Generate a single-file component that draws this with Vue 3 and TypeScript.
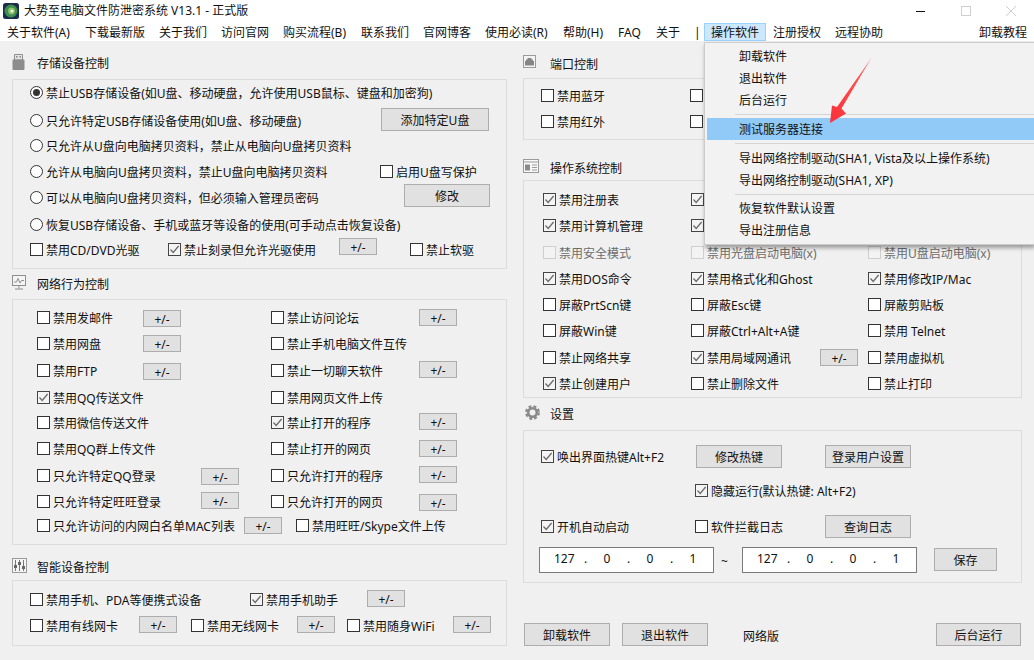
<script setup lang="ts">
type Kind = 'check' | 'radio' | 'btn' | 'ip' | 'text'
interface Item { kind: Kind; x: number; label?: string; on?: boolean; off?: boolean; w?: number; dy?: number; parts?: string[] }
interface Row { cy: number; items: Item[] }
interface Section { x: number; right: number; icon?: string; title?: string; titleX?: number; headCy?: number; top: number; bottom: number; rows: Row[] }

const c = (x: number, label = '', on = false, off = false): Item => ({ kind: 'check', x, label, on, off })
const r = (x: number, label: string, on = false): Item => ({ kind: 'radio', x, label, on })
const b = (x: number, w: number, label: string, dy = 0): Item => ({ kind: 'btn', x, w, label, dy })
const pm = (x: number, dy = 0): Item => b(x, 38, '+/-', dy)
const ip = (x: number): Item => ({ kind: 'ip', x, parts: ['127', '0', '0', '1'] })
const t = (x: number, label: string): Item => ({ kind: 'text', x, label })

const leftSections: Section[] = [
  {
    x: 12, right: 507, icon: 'usb', title: '存储设备控制', titleX: 37, headCy: 62, top: 79, bottom: 269,
    rows: [
      { cy: 92, items: [r(30, '禁止USB存储设备(如U盘、移动硬盘\uFF0C允许使用USB鼠标、键盘和加密狗)', true)] },
      { cy: 120, items: [r(30, '只允许特定USB存储设备使用(如U盘、移动硬盘)'), b(381, 108, '添加特定U盘', -1)] },
      { cy: 145, items: [r(30, '只允许从U盘向电脑拷贝资料\uFF0C禁止从电脑向U盘拷贝资料')] },
      { cy: 171, items: [r(30, '允许从电脑向U盘拷贝资料\uFF0C禁止U盘向电脑拷贝资料'), c(380, '启用U盘写保护')] },
      { cy: 197, items: [r(30, '可以从电脑向U盘拷贝资料\uFF0C但必须输入管理员密码'), b(404, 86, '修改', -1.5)] },
      { cy: 224, items: [r(30, '恢复USB存储设备、手机或蓝牙等设备的使用(可手动点击恢复设备)')] },
      { cy: 249, items: [c(30, '禁用CD/DVD光驱'), c(168, '禁止刻录但允许光驱使用', true), pm(339, -2.5), c(410, '禁止软驱')] },
    ],
  },
  {
    x: 12, right: 507, icon: 'monitor', title: '网络行为控制', titleX: 37, headCy: 283, top: 299, bottom: 545,
    rows: [
      { cy: 317, items: [c(37, '禁用发邮件'), pm(143, 1.5), c(271, '禁止访问论坛'), pm(419, 0.5)] },
      { cy: 343, items: [c(37, '禁用网盘'), pm(143, 0.5), c(271, '禁止手机电脑文件互传')] },
      { cy: 370, items: [c(37, '禁用FTP'), pm(143, 1.5), c(271, '禁止一切聊天软件'), pm(419, -0.5)] },
      { cy: 397, items: [c(37, '禁用QQ传送文件', true), c(271, '禁用网页文件上传')] },
      { cy: 422, items: [c(37, '禁用微信传送文件'), c(271, '禁止打开的程序', true), pm(419, -0.5)] },
      { cy: 448, items: [c(37, '禁用QQ群上传文件'), c(271, '禁止打开的网页'), pm(419, 0.5)] },
      { cy: 475, items: [c(37, '只允许特定QQ登录'), pm(201, 1.5), c(271, '只允许打开的程序'), pm(419, -0.5)] },
      { cy: 501, items: [c(37, '只允许特定旺旺登录'), pm(201, -0.5), c(271, '只允许打开的网页'), pm(419, 1.5)] },
      { cy: 525, items: [c(37, '只允许访问的内网白名单MAC列表'), pm(244, 0.5), c(296, '禁用旺旺/Skype文件上传')] },
    ],
  },
  {
    x: 12, right: 507, icon: 'sliders', title: '智能设备控制', titleX: 37, headCy: 566, top: 580, bottom: 646,
    rows: [
      { cy: 599, items: [c(30, '禁用手机、PDA等便携式设备'), c(250, '禁用手机助手', true), pm(367, -0.5)] },
      { cy: 625, items: [c(30, '禁用有线网卡'), pm(139, -0.5), c(191, '禁用无线网卡'), pm(297, -0.5), c(347, '禁用随身WiFi'), pm(453, -0.5)] },
    ],
  },
]

const rightSections: Section[] = [
  {
    x: 523, right: 1022, icon: 'port', title: '端口控制', titleX: 550, headCy: 63, top: 78, bottom: 140,
    rows: [
      { cy: 95, items: [c(541, '禁用蓝牙'), c(690)] },
      { cy: 121, items: [c(541, '禁用红外'), c(690)] },
    ],
  },
  {
    x: 523, right: 1022, icon: 'window', title: '操作系统控制', titleX: 550, headCy: 167, top: 180, bottom: 398,
    rows: [
      { cy: 199, items: [c(543, '禁用注册表', true), c(691, '', true)] },
      { cy: 225, items: [c(543, '禁用计算机管理', true), c(691, '', true)] },
      { cy: 252, items: [c(543, '禁用安全模式', false, true), c(691, '禁用光盘启动电脑(x)', false, true), c(868, '禁用U盘启动电脑(x)', false, true)] },
      { cy: 278, items: [c(543, '禁用DOS命令', true), c(691, '禁用格式化和Ghost', true), c(868, '禁用修改IP/Mac', true)] },
      { cy: 304, items: [c(543, '屏蔽PrtScn键'), c(691, '屏蔽Esc键'), c(868, '屏蔽剪贴板')] },
      { cy: 330, items: [c(543, '屏蔽Win键'), c(691, '屏蔽Ctrl+Alt+A键'), c(868, '禁用 Telnet')] },
      { cy: 357, items: [c(543, '禁止网络共享'), c(691, '禁用局域网通讯', true), pm(820, 0.5), c(868, '禁用虚拟机')] },
      { cy: 383, items: [c(543, '禁止创建用户', true), c(691, '禁止删除文件'), c(868, '禁止打印')] },
    ],
  },
  {
    x: 523, right: 1022, icon: 'gear', title: '设置', titleX: 550, headCy: 413, top: 430, bottom: 583,
    rows: [
      { cy: 456, items: [c(541, '唤出界面热键Alt+F2', true), b(696, 86, '修改热键', 0.5), b(825, 86, '登录用户设置', 0.5)] },
      { cy: 490, items: [c(695, '隐藏运行(默认热键: Alt+F2)', true)] },
      { cy: 526, items: [c(541, '开机自动启动', true), c(695, '软件拦截日志'), b(825, 86, '查询日志', 0.5)] },
      { cy: 559.5, items: [ip(539), t(721, '~'), ip(742), b(934, 63, '保存')] },
    ],
  },
  {
    x: 523, right: 1022, top: 614, bottom: 650,
    rows: [
      { cy: 634.5, items: [b(524, 86, '卸载软件'), b(622, 86, '退出软件'), t(743, '网络版'), b(936, 85, '后台运行')] },
    ],
  },
]

const BODY_TOP = 41
const ROW_H = 20

function sectionStyle(sec: Section, list: Section[], i: number) {
  const prev = i === 0 ? BODY_TOP : list[i - 1].bottom
  const first = sec.headCy !== undefined ? sec.headCy - ROW_H / 2 : sec.top
  return { marginTop: `${first - prev}px`, marginLeft: `${sec.x}px`, width: `${sec.right - sec.x}px` }
}
function headStyle(sec: Section) {
  return { paddingLeft: `${(sec.titleX ?? sec.x) - sec.x}px` }
}
function boxStyle(sec: Section) {
  const mt = sec.headCy !== undefined ? sec.top - (sec.headCy + ROW_H / 2) : 0
  return { marginTop: `${mt}px`, height: `${sec.bottom - sec.top}px` }
}
function rowStyle(sec: Section, i: number) {
  const prevEdge = i === 0 ? sec.top + 1 : sec.rows[i - 1].cy + ROW_H / 2
  return { marginTop: `${sec.rows[i].cy - ROW_H / 2 - prevEdge}px`, paddingLeft: `${sec.rows[i].items[0].x - sec.x - 1}px` }
}
function cellStyle(row: Row, j: number) {
  const next = row.items[j + 1]
  return next ? { width: `${next.x - row.items[j].x}px` } : {}
}
function btnStyle(it: Item) {
  return { width: `${it.w}px`, marginTop: `${(it.dy ?? 0) * 2}px` }
}

const menuItems = [
  { label: '关于软件(A)', w: 78 }, { label: '下载最新版', w: 74 }, { label: '关于我们', w: 62 }, { label: '访问官网', w: 62 },
  { label: '购买流程(B)', w: 78 }, { label: '联系我们', w: 62 }, { label: '官网博客', w: 62 }, { label: '使用必读(R)', w: 78 },
  { label: '帮助(H)', w: 55 }, { label: 'FAQ', w: 38 }, { label: '关于', w: 38 }, { label: '|', w: 17 },
  { label: '操作软件', w: 62 }, { label: '注册授权', w: 62 }, { label: '远程协助', w: 62 },
]
const dropGroups = [
  [{ label: '卸载软件' }, { label: '退出软件' }, { label: '后台运行' }],
  [{ label: '测试服务器连接', hot: true }],
  [{ label: '导出网络控制驱动(SHA1, Vista及以上操作系统)' }, { label: '导出网络控制驱动(SHA1, XP)' }],
  [{ label: '恢复软件默认设置' }, { label: '导出注册信息' }],
] as { label: string; hot?: boolean }[][]
const columns = [leftSections, rightSections]
</script>

<template>
  <div class="app">
    <header class="titlebar">
      <svg class="appicon" width="16" height="16" viewBox="0 0 16 16">
        <rect x="0" y="0" width="16" height="16" rx="2.5" fill="#1d2b4a" />
        <circle cx="8" cy="8" r="6.5" fill="#3c8f4e" />
        <circle cx="8.500" cy="8" r="3.4" fill="#8fc06a" />
        <circle cx="9" cy="8" r="1.600" fill="#e8f3d8" />
      </svg>
      <span class="apptitle">大势至电脑文件防泄密系统 V13.1 - 正式版</span>
      <div class="winctl">
        <svg width="118" height="20" viewBox="0 0 118 20">
          <path d="M0 10.5H9" stroke="#111" fill="none" />
          <rect x="45.5" y="5.5" width="9" height="9" stroke="#cfcfcf" fill="none" />
          <path d="M90 5L100 15M100 5L90 15" stroke="#cfcfcf" fill="none" />
        </svg>
      </div>
    </header>

    <nav class="menubar">
      <span v-for="m in menuItems" :key="m.label" class="menuitem" :class="{ active: m.label === '操作软件' }" :style="{ width: `${m.w}px` }">{{ m.label }}</span>
      <span class="menuitem last">卸载教程</span>
    </nav>

    <main class="body">
      <div v-for="(col, ci) in columns" :key="ci" class="column">
        <section v-for="(sec, si) in col" :key="si" :style="sectionStyle(sec, col, si)">
          <div v-if="sec.title" class="head" :style="headStyle(sec)">
            <svg v-if="sec.icon === 'usb'" class="sicon" width="13" height="16" viewBox="0 0 13 16">
              <path d="M2.5 .5H10.500V6H2.500Z" fill="#e6e6e6" stroke="#8f8f8f" />
              <rect x="4" y="2" width="1.6" height="1.6" fill="#8f8f8f" />
              <rect x="7.4" y="2" width="1.6" height="1.6" fill="#8f8f8f" />
              <rect x="0.5" y="5.5" width="12" height="10.5" rx="1" fill="#8c8c8c" />
            </svg>
            <svg v-else-if="sec.icon === 'monitor'" class="sicon" width="14" height="15" viewBox="0 0 14 15">
              <rect x=".5" y=".5" width="13" height="10" fill="#f4f4f4" stroke="#8f8f8f" />
              <path d="M2 7H4.500L6 3.500L8 8L9.500 5.500H12" stroke="#8f8f8f" fill="none" />
              <path d="M7 11V13.500M3 14H11" stroke="#8f8f8f" fill="none" />
            </svg>
            <svg v-else-if="sec.icon === 'sliders'" class="sicon" width="15" height="15" viewBox="0 0 15 15">
              <rect x=".5" y=".5" width="14" height="14" fill="#f4f4f4" stroke="#9a9a9a" />
              <path d="M3.500 2V13M7.500 2V13M11.500 2V13" stroke="#777" fill="none" />
              <rect x="2" y="7" width="3" height="3" fill="#666" />
              <rect x="6" y="4" width="3" height="3" fill="#666" />
              <rect x="10" y="8" width="3" height="3" fill="#666" />
            </svg>
            <svg v-else-if="sec.icon === 'port'" class="sicon" width="13" height="13" viewBox="0 0 13 13">
              <rect x=".5" y=".5" width="12" height="12" fill="#f4f4f4" stroke="#9a9a9a" />
              <path d="M4.500 3H8.500V4.500H10V6H11V10.500H2V6H3V4.500H4.500Z" fill="#858585" />
            </svg>
            <svg v-else-if="sec.icon === 'window'" class="sicon" width="16" height="14" viewBox="0 0 16 14">
              <rect x=".5" y=".5" width="15" height="13" fill="#f8f8f8" stroke="#9a9a9a" />
              <path d="M1 3H15" stroke="#9a9a9a" fill="none" />
              <rect x="2" y="5.500" width="5" height="6" fill="#8a8a8a" />
              <path d="M9 6H14M9 8.500H14M9 11H14" stroke="#9a9a9a" fill="none" />
            </svg>
            <svg v-else-if="sec.icon === 'gear'" class="sicon gear" width="15" height="15" viewBox="0 0 15 15">
              <circle cx="7.500" cy="7.500" r="4.300" fill="none" stroke="#8a8a8a" stroke-width="2.600" />
              <circle cx="7.500" cy="7.500" r="6.200" fill="none" stroke="#8a8a8a" stroke-width="2.400" stroke-dasharray="2.900 2" />
            </svg>
            <span class="headtext">{{ sec.title }}</span>
          </div>
          <div class="box" :class="{ plain: !sec.title }" :style="boxStyle(sec)">
            <div v-for="(row, ri) in sec.rows" :key="ri" class="row" :style="rowStyle(sec, ri)">
              <div v-for="(it, ii) in row.items" :key="ii" class="cell" :style="cellStyle(row, ii)">
                <template v-if="it.kind === 'check'">
                  <span class="check" :class="{ on: it.on, off: it.off }">
                    <svg v-if="it.on" width="11" height="11" viewBox="0 0 11 11">
                      <path d="M1.500 5.500L4.200 8.400L9.600 2" fill="none" stroke="#6a6a6a" stroke-width="1.300" />
                    </svg>
                  </span>
                  <span v-if="it.label" class="label" :class="{ dim: it.off }">{{ it.label }}</span>
                </template>
                <template v-else-if="it.kind === 'radio'">
                  <span class="radio" :class="{ on: it.on }"></span>
                  <span class="label">{{ it.label }}</span>
                </template>
                <button v-else-if="it.kind === 'btn'" class="btn" :class="{ tall: it.w !== 38 }" :style="btnStyle(it)">{{ it.label }}</button>
                <div v-else-if="it.kind === 'ip'" class="ip">
                  <template v-for="(p, pi) in it.parts" :key="pi">
                    <span class="octet">{{ p }}</span>
                    <span v-if="pi < 3" class="dot">.</span>
                  </template>
                </div>
                <span v-else class="plaintext">{{ it.label }}</span>
              </div>
            </div>
          </div>
        </section>
      </div>
    </main>

    <div class="dropdown">
      <template v-for="(g, gi) in dropGroups" :key="gi">
        <div v-if="gi > 0" class="sep" :class="{ short: gi === 3 }"></div>
        <div v-for="d in g" :key="d.label" class="dropitem" :class="{ hot: d.hot }">{{ d.label }}</div>
      </template>
    </div>

    <svg class="arrow" width="50" height="72" viewBox="0 0 50 72">
      <defs>
        <linearGradient id="arrowgrad" x1="1" y1="0" x2="0" y2="1">
          <stop offset="0" stop-color="#ff9a9a" />
          <stop offset=".35" stop-color="#ff4d4d" />
          <stop offset="1" stop-color="#fb2f38" />
        </linearGradient>
      </defs>
      <path d="M46 2L15.500 53.500L20 58.500L4 68L6 50.500L11 52Z" fill="url(#arrowgrad)" />
    </svg>
  </div>
</template>

<style>
html, body { margin: 0; padding: 0; overflow: hidden; background: #f0f0f0; }
</style>

<style scoped>
.app {
  position: relative;
  width: 1034px;
  height: 660px;
  overflow: hidden;
  background: #f0f0f0;
  color: #111;
  font: 12px/20px "Noto Sans", "Noto Sans CJK SC", sans-serif;
}
.titlebar {
  display: flex;
  align-items: center;
  height: 22px;
  padding-left: 3px;
  background: #fff;
}
.appicon { flex: none; }
.apptitle { margin: 0 0 0 5px; white-space: nowrap; }
.winctl { margin-left: auto; display: flex; }
.menubar {
  display: flex;
  height: 19px;
  background: #fff;
}
.menuitem {
  flex: none;
  padding: 0 0 0 7px;
  line-height: 21px;
  white-space: nowrap;
  box-sizing: border-box;
}
.menuitem.active {
  margin-top: 1px;
  line-height: 19px;
  background: #cce8ff;
  box-shadow: inset 0 0 0 1px #99d1ff;
}
.menuitem.last { margin-left: auto; padding-right: 7px; }
.body { display: flex; }
.column { flex: none; width: 517px; display: flow-root; }
.column + .column section { margin-left: 6px !important; }
.head {
  display: flex;
  align-items: center;
  position: relative;
  height: 20px;
}
.sicon { position: absolute; left: 0; top: 2px; }
.sicon.gear { left: 2px; }
.headtext { white-space: nowrap; margin-top: 4px; }
.box {
  box-sizing: border-box;
  border: 1px solid #dcdcdc;
  display: flow-root;
}
.box.plain { border-color: transparent; }
.row { display: flex; height: 20px; }
.cell {
  flex: none;
  display: flex;
  align-items: center;
  height: 20px;
  white-space: nowrap;
}
.check {
  flex: none;
  box-sizing: border-box;
  width: 13px;
  height: 13px;
  border: 1px solid #333;
  background: #fff;
  display: flex;
  align-items: center;
  justify-content: center;
}
.check.on { background: #f4f4f4; border-color: #444; }
.check.off { background: #f3f3f3; border-color: #cfcfcf; }
.radio {
  flex: none;
  box-sizing: border-box;
  width: 13px;
  height: 13px;
  border: 1px solid #333;
  border-radius: 50%;
  background: #fff;
  display: flex;
  align-items: center;
  justify-content: center;
}
.radio.on::after {
  content: "";
  width: 7px;
  height: 7px;
  border-radius: 50%;
  background: #333;
}
.label { margin: 4px 0 0 3px; }
.label.dim { color: #6d6d6d; }
.btn {
  flex: none;
  box-sizing: border-box;
  height: 17px;
  padding: 0;
  border: 1px solid #adadad;
  border-radius: 0;
  background: #e1e1e1;
  color: #111;
  font: inherit;
  line-height: 17px;
  text-align: center;
}
.btn.tall { height: 23px; line-height: 23px; }
.ip {
  flex: none;
  box-sizing: border-box;
  display: flex;
  width: 175px;
  height: 26px;
  padding: 0 0 1px 14px;
  align-items: center;
  border: 1px solid #7a7a7a;
  background: #fff;
}
.octet { width: 20px; text-align: center; }
.dot { width: 23px; text-align: center; }
.plaintext { white-space: nowrap; margin-top: 4px; }
.dropdown {
  position: absolute;
  left: 704px;
  right: 0;
  top: 42px;
  height: 203px;
  box-sizing: border-box;
  padding: 2px 0 0 2px;
  border: 1px solid #cccccc;
  border-right: 0;
  background: #f2f2f2;
  box-shadow: 1px 3px 4px rgba(0, 0, 0, 0.35);
}
.dropitem {
  height: 22px;
  line-height: 24px;
  padding-left: 32px;
  white-space: nowrap;
}
.dropitem.hot { background: #91c9f7; }
.sep {
  height: 1px;
  margin: 3px 0 3px 28px;
  background: #d4d4d4;
}
.sep.short { margin-bottom: 2px; }
.arrow {
  position: absolute;
  left: 826px;
  top: 55px;
}
</style>
